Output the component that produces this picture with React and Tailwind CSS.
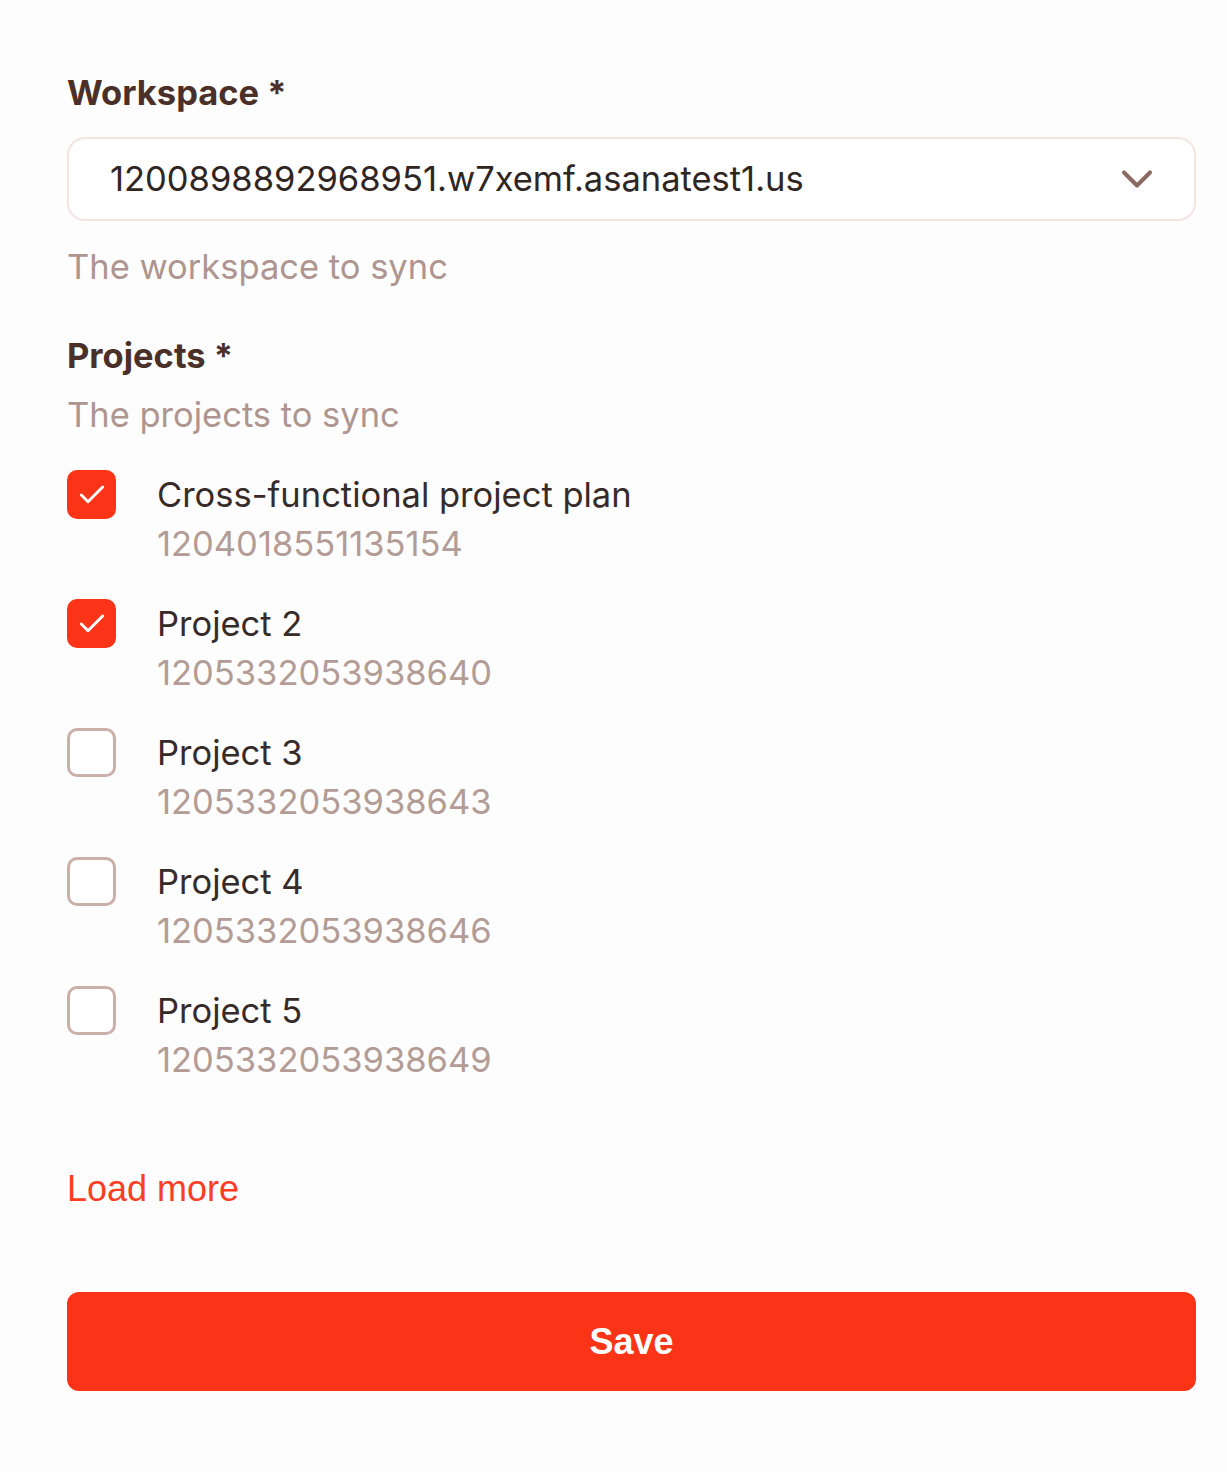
import { ChevronDown, Check } from 'lucide-react'

const projects = [
    { name: 'Cross-functional project plan', id: '1204018551135154', checked: true },
    { name: 'Project 2', id: '1205332053938640', checked: true },
    { name: 'Project 3', id: '1205332053938643', checked: false },
    { name: 'Project 4', id: '1205332053938646', checked: false },
    { name: 'Project 5', id: '1205332053938649', checked: false },
]

export default function App() {
    return (
        <div className="min-h-[1472px] w-[1227px] bg-[#fdfdfd] font-['Inter',sans-serif]">
            <div className="pl-[67px] pr-[31px] pt-[70px] pb-[80px]">

                {/* workspace */}
                <label className="block text-[34.5px] leading-[46px] font-bold text-[#4b3029]">Workspace *</label>
                <div className="mt-[21px] h-[84px] rounded-[18px] border-2 border-[#f2e4e0] bg-white flex items-center justify-between pl-[41px] pr-[31px]">
                    <span className="text-[34.5px] text-[#2f2624]">1200898892968951.w7xemf.asanatest1.us</span>
                    <ChevronDown size={52} strokeWidth={1.9} className="text-[#8a6a62]" />
                </div>
                <p className="mt-[26px] text-[34.5px] leading-[40px] text-[#ae958f]">The workspace to sync</p>

                {/* projects */}
                <label className="block mt-[46px] text-[34.5px] leading-[46px] font-bold text-[#4b3029]">Projects *</label>
                <p className="mt-[16px] text-[34.5px] leading-[40px] text-[#ae958f]">The projects to sync</p>

                <div className="mt-[35px] flex flex-col gap-[31px]">
                    {projects.map(p => (
                        <div key={p.id} className="flex items-start gap-[41px]">
                            {p.checked ? (
                                <span className="w-[49px] h-[49px] shrink-0 rounded-[10px] bg-[#fb3418] flex items-center justify-center">
                                    <Check size={32} strokeWidth={2.2} className="text-white" />
                                </span>
                            ) : (
                                <span className="w-[49px] h-[49px] shrink-0 rounded-[10px] border-[3px] border-[#cbb0aa] bg-white" />
                            )}
                            <div>
                                <div className="text-[34.5px] leading-[49px] text-[#362b29]">{p.name}</div>
                                <div className="text-[34.5px] leading-[49px] text-[#b39c96]">{p.id}</div>
                            </div>
                        </div>
                    ))}
                </div>

                <button className="block mt-[84px] text-[36px] leading-[42px] text-[#fb3d23] font-['Liberation_Sans',sans-serif]">Load more</button>

                <button className="mt-[82px] w-full h-[99px] rounded-[12px] bg-[#fb3418] text-white text-[36px] font-bold font-['Liberation_Sans',sans-serif]">Save</button>
            </div>
        </div>
    )
}
